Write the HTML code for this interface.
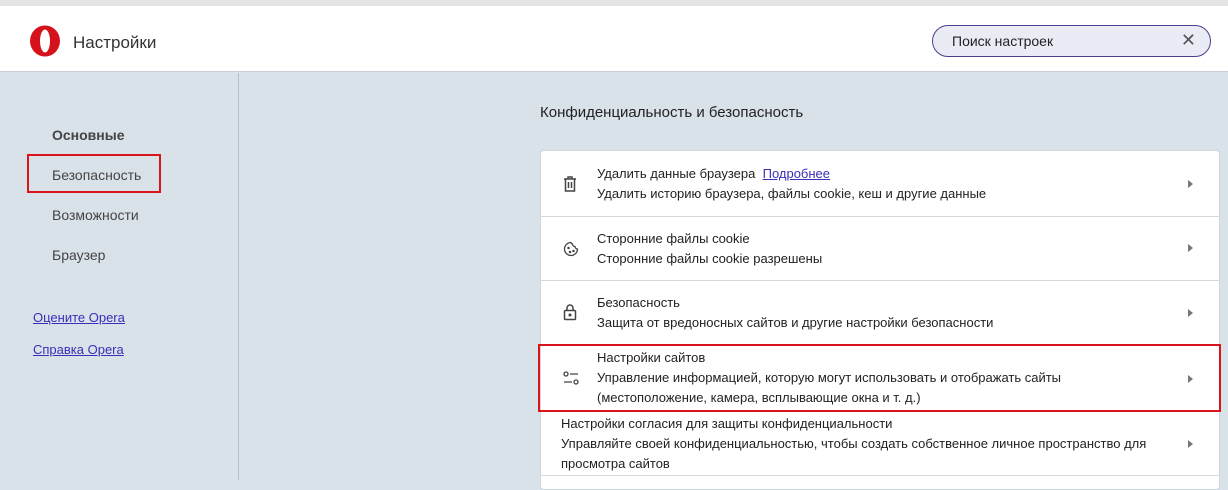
<!DOCTYPE html>
<html><head><meta charset="utf-8"><style>
*{margin:0;padding:0;box-sizing:border-box}
body{width:1228px;height:480px;overflow:hidden;background:#d9e1e9;font-family:"Liberation Sans","DejaVu Sans",sans-serif;color:#2b2f36;position:relative}
.top{position:absolute;left:0;top:0;width:1228px;height:6px;background:#e4e4e4}
.hdr{position:absolute;left:0;top:6px;width:1228px;height:66px;background:#fff;border-bottom:1px solid #c8ced6}
.logo{position:absolute;left:29px;top:19px}
.title{position:absolute;left:73px;top:27px;font-size:17px;color:#333}
.search{position:absolute;left:932px;top:19px;width:279px;height:32px;border:1.5px solid #4a3f8c;border-radius:16px;background:#e9ecf5}
.search span{position:absolute;left:19px;top:7px;font-size:14px;color:#222}
.search i{position:absolute;right:14px;top:4px;font-style:normal;font-size:18px;color:#555}
.side{position:absolute;left:238px;top:73px;width:1px;height:407px;background:#b8c0ca}
.nav{position:absolute;left:52px;font-size:14px;color:#444}
.link{position:absolute;left:33px;font-size:13px;color:#3a2fb8;text-decoration:underline}
.redbox{position:absolute;border:2.5px solid #d9141b}
h2{position:absolute;left:540px;top:104px;font-size:15px;font-weight:normal;color:#222}
.card{position:absolute;left:540px;top:150px;width:680px;height:340px;background:#fff;border-radius:4px;border:1px solid #d0d6dd}
.row{position:absolute;left:0;width:678px;border-bottom:1px solid #d4d8de}
.row .t{position:absolute;left:56px;font-size:13px;line-height:20px;color:#222}
.row .ic{position:absolute;left:22px}
.row .ar{position:absolute;right:26px;width:0;height:0;border-left:5px solid #777;border-top:4px solid transparent;border-bottom:4px solid transparent}
a{color:#3a2fb8;text-decoration:underline}
</style></head><body>
<div class="top"></div>
<div class="hdr">
<svg class="logo" width="32" height="32" viewBox="0 0 32 32"><ellipse cx="16" cy="16" rx="15" ry="15.5" fill="#d5121c"/><ellipse cx="16" cy="16" rx="5" ry="11.5" fill="#fff"/></svg>
<div class="title">Настройки</div>
<div class="search"><span>Поиск настроек</span><i>✕</i></div>
</div>
<div class="side"></div>
<div class="nav" style="top:127px;font-weight:bold">Основные</div>
<div class="nav" style="top:167px">Безопасность</div>
<div class="redbox" style="left:27px;top:154px;width:134px;height:39px"></div>
<div class="nav" style="top:207px">Возможности</div>
<div class="nav" style="top:247px">Браузер</div>
<div class="link" style="top:310px">Оцените Opera</div>
<div class="link" style="top:342px">Справка Opera</div>
<h2>Конфиденциальность и безопасность</h2>
<div class="card">
<div class="row" style="top:0;height:66px">
<svg class="ic" style="top:25px" width="14" height="16" viewBox="0 0 14 16" fill="none" stroke="#444" stroke-width="1.5"><path d="M1 3h12M5 3V1h4v2M2.5 3v12h9V3M5.5 6v6M8.5 6v6"/></svg>
<div class="t" style="top:13px">Удалить данные браузера &nbsp;<a>Подробнее</a><br>Удалить историю браузера, файлы cookie, кеш и другие данные</div><div class="ar" style="top:29px"></div></div>
<div class="row" style="top:66px;height:64px">
<svg class="ic" style="top:24px" width="16" height="16" viewBox="0 0 16 16" fill="none" stroke="#444" stroke-width="1.3"><path d="M8 1.5a6.5 6.5 0 1 0 6.5 6.5 2.5 2.5 0 0 1-2.5-2.5 2.5 2.5 0 0 1-2.5-2.5A1.5 1.5 0 0 1 8 1.5z"/><circle cx="5.5" cy="7" r=".6" fill="#444"/><circle cx="7" cy="11" r=".6" fill="#444"/><circle cx="10.5" cy="10" r=".6" fill="#444"/></svg>
<div class="t" style="top:12px">Сторонние файлы cookie<br>Сторонние файлы cookie разрешены</div><div class="ar" style="top:27px"></div></div>
<div class="row" style="top:130px;height:65px">
<svg class="ic" style="top:22px" width="14" height="18" viewBox="0 0 14 18" fill="none" stroke="#444" stroke-width="1.5"><rect x="1.5" y="7.5" width="11" height="9" rx="1"/><path d="M4 7.5V5a3 3 0 0 1 6 0v2.5"/><circle cx="7" cy="12" r=".8" fill="#444"/></svg>
<div class="t" style="top:12px">Безопасность<br>Защита от вредоносных сайтов и другие настройки безопасности</div><div class="ar" style="top:28px"></div></div>
<div class="row" style="top:195px;height:66px">
<svg class="ic" style="top:25px" width="16" height="14" viewBox="0 0 16 14" fill="none" stroke="#444" stroke-width="1.3"><circle cx="3" cy="3" r="2"/><path d="M7 3h8M1 11h8"/><circle cx="13" cy="11" r="2"/></svg>
<div class="t" style="top:2px">Настройки сайтов<br>Управление информацией, которую могут использовать и отображать сайты<br>(местоположение, камера, всплывающие окна и т. д.)</div><div class="ar" style="top:29px"></div></div>
<div class="row" style="top:261px;height:64px">
<div class="t" style="top:2px;left:20px">Настройки согласия для защиты конфиденциальности<br>Управляйте своей конфиденциальностью, чтобы создать собственное личное пространство для<br>просмотра сайтов</div><div class="ar" style="top:28px"></div></div>
</div>
<div class="redbox" style="left:538px;top:344px;width:683px;height:68px"></div>
</body></html>
